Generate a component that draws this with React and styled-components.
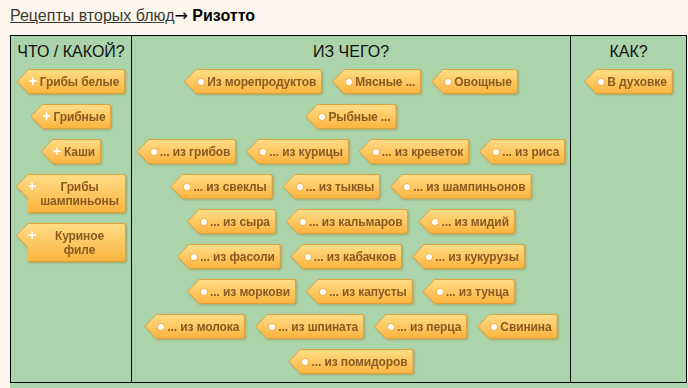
import React from "react";
import styled, { createGlobalStyle } from "styled-components";

const Global = createGlobalStyle`
  html, body { margin: 0; padding: 0; background: #fdf7ef; overflow: hidden; }
  body { font-family: "Liberation Sans", Arial, sans-serif; }
`;

const Page = styled.div`
  padding: 7px 0 0 10px;
  width: 688px;
  height: 388px;
  box-sizing: border-box;
  overflow: hidden;
`;

const Crumbs = styled.div`
  font-size: 16px;
  line-height: 18px;
  color: #000;
  margin-bottom: 10px;
  white-space: nowrap;
`;

const CrumbLink = styled.a`
  color: #3a3a2c;
  text-decoration: underline;
`;

const Arrow = styled.span`
  font-family: "DejaVu Sans", sans-serif;
  font-size: 16px;
`;

const Current = styled.b`
  color: #000;
`;

const Table = styled.div`
  display: grid;
  grid-template-columns: 120px 439px 116px;
  width: max-content;
  border: 1px solid #000;
  background: #abd4aa;
`;

const Cell = styled.div`
  border-left: ${(p) => (p.$first ? "none" : "1px solid #000")};
  padding: 7px ${(p) => (p.$pad ? "4px" : "0")} 8px;
  display: flex;
  flex-direction: column;
  align-items: center;
`;

const Head = styled.div`
  font-size: 16px;
  line-height: 18px;
  color: #111;
  text-align: center;
  margin-bottom: 8px;
`;

const Stack = styled.div`
  display: flex;
  flex-direction: column;
  align-items: center;
  gap: 10px;
`;

const Groups = styled.div`
  display: flex;
  flex-direction: column;
  gap: 10px;
  width: 100%;
`;

const Wrap = styled.div`
  display: flex;
  flex-wrap: wrap;
  justify-content: center;
  gap: 10px;
`;

const Footer = styled.div`
  height: 20px;
  background: #abd4aa;
  width: 679px;
`;

const TagShadow = styled.span`
  display: inline-flex;
  max-width: ${(p) => p.$max || "none"};
  filter: drop-shadow(1px 1px 1px rgba(130, 90, 10, 0.35));
`;

const TagBorder = styled.span`
  display: flex;
  flex: 1;
  padding: 1px;
  background: #e3a13c;
  border-radius: 0 3px 3px 0;
  clip-path: polygon(12px 0, 100% 0, 100% 100%, 12px 100%, 12px 25px, 0 12.5px);
`;

const TagBody = styled.span`
  position: relative;
  flex: 1;
  padding: 5px 5px 4px 22px;
  background: linear-gradient(#ffdc86, #fcb440);
  border-radius: 0 2px 2px 0;
  clip-path: polygon(11px 0, 100% 0, 100% 100%, 11px 100%, 11px 23px, 0 11.5px);
  font-size: 12px;
  font-weight: bold;
  letter-spacing: -0.1px;
  line-height: 14px;
  color: #8b5a22;
  text-align: center;
  white-space: ${(p) => (p.$wrap ? "normal" : "nowrap")};
`;

const Dot = styled.span`
  position: absolute;
  left: 13px;
  top: 9px;
  width: 6px;
  height: 6px;
  border-radius: 50%;
  background: #fff;
  box-shadow: 0 0 0 1px rgba(235, 160, 50, 0.45);
`;

const Plus = styled.span`
  position: absolute;
  left: 11px;
  top: 4px;
  font-size: 14px;
  line-height: 14px;
  font-weight: bold;
  color: #fff;
`;

function Tag({ children, plus, max }) {
  return (
    <TagShadow $max={max}>
      <TagBorder>
        <TagBody $wrap={!!max}>
          {plus ? <Plus>+</Plus> : <Dot />}
          {children}
        </TagBody>
      </TagBorder>
    </TagShadow>
  );
}

const whatKind = ["Грибы белые", "Грибные", "Каши", "Грибы шампиньоны", "Куриное филе"];
const groupA = ["Из морепродуктов", "Мясные ...", "Овощные", "Рыбные ..."];
const groupB = [
  "... из грибов",
  "... из курицы",
  "... из креветок",
  "... из риса",
  "... из свеклы",
  "... из тыквы",
  "... из шампиньонов",
  "... из сыра",
  "... из кальмаров",
  "... из мидий",
  "... из фасоли",
  "... из кабачков",
  "... из кукурузы",
  "... из моркови",
  "... из капусты",
  "... из тунца",
  "... из молока",
  "... из шпината",
  "... из перца",
  "Свинина",
  "... из помидоров",
];

export default function App() {
  return (
    <Page>
      <Global />
      <Crumbs>
        <CrumbLink href="#">Рецепты вторых блюд</CrumbLink>
        <Arrow>→</Arrow> <Current>Ризотто</Current>
      </Crumbs>
      <Table>
        <Cell $first>
          <Head>ЧТО / КАКОЙ?</Head>
          <Stack>
            {whatKind.map((t) => (
              <Tag key={t} plus max="110px">
                {t}
              </Tag>
            ))}
          </Stack>
        </Cell>
        <Cell $pad>
          <Head>ИЗ ЧЕГО?</Head>
          <Groups>
            <Wrap>
              {groupA.map((t) => (
                <Tag key={t}>{t}</Tag>
              ))}
            </Wrap>
            <Wrap>
              {groupB.map((t) => (
                <Tag key={t}>{t}</Tag>
              ))}
            </Wrap>
          </Groups>
        </Cell>
        <Cell>
          <Head>КАК?</Head>
          <Stack>
            <Tag>В духовке</Tag>
          </Stack>
        </Cell>
      </Table>
      <Footer />
    </Page>
  );
}
